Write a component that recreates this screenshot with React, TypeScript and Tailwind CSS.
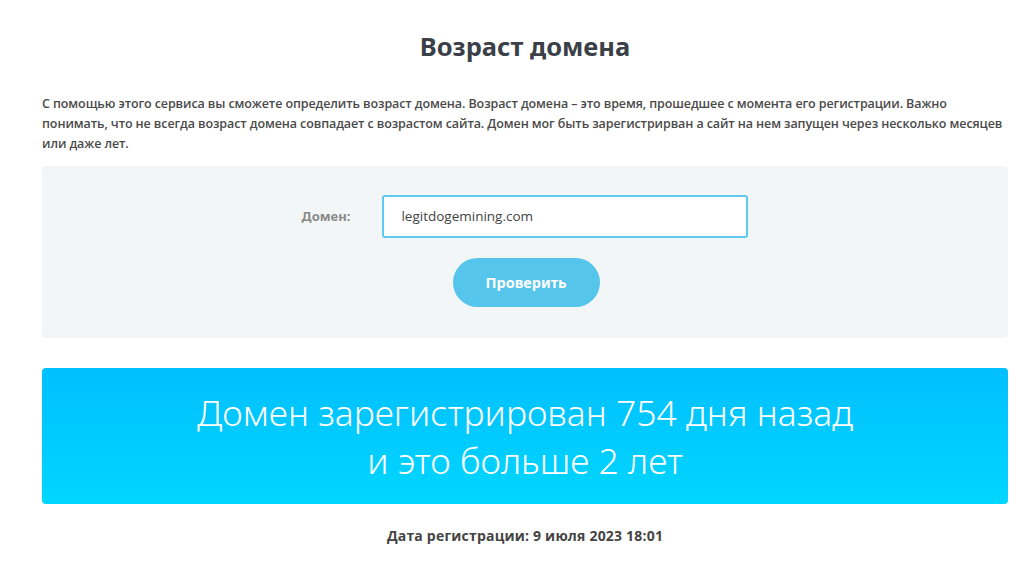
import React from "react";

export default function App() {
  return (
    <div className="min-h-[561px] bg-white pl-[42px] pr-[14px] pt-[30px] font-['Open_Sans',sans-serif]">
      <h1 className="text-center text-[25.5px] font-bold leading-[32px] text-[#3b3f48] font-['Noto_Sans',sans-serif]">
        Возраст домена
      </h1>
      <p className="mt-[32px] text-[12.5px] font-semibold leading-[20px] tracking-[-0.1px] text-[#4a4a4a]">
        С помощью этого сервиса вы сможете определить возраст домена. Возраст домена – это время, прошедшее с момента его регистрации. Важно понимать, что не всегда возраст домена совпадает с возрастом сайта. Домен мог быть зарегистрирван а сайт на нем запущен через несколько месяцев или даже лет.
      </p>
      <div className="mt-[12px] flex h-[172px] flex-col items-center rounded-[4px] bg-[#f3f6f7] pt-[29px]">
        <div className="flex items-center">
          <span className="mr-[32px] text-[13px] font-bold text-[#8a8a8a] font-['Noto_Sans',sans-serif]">Домен:</span>
          <div className="flex h-[43px] w-[366px] items-center rounded-[3px] border-2 border-[#5fc9ef] bg-white pl-[17px] text-[13.5px] text-[#444]">
            legitdogemining.com
          </div>
        </div>
        <button className="mt-[20px] ml-[2px] h-[49px] w-[147px] rounded-full bg-[#56c5ec] text-[14.5px] font-bold text-white font-['Noto_Sans',sans-serif]">
          Проверить
        </button>
      </div>
      <div className="mt-[30px] flex h-[136px] flex-col items-center justify-center rounded-[4px] bg-gradient-to-b from-[#00bfff] to-[#00d6ff] text-center text-[35.5px] font-light leading-[48px] text-white font-['Noto_Sans',sans-serif]">
        <div>Домен зарегистрирован 754 дня назад</div>
        <div>и это больше 2 лет</div>
      </div>
      <div className="mt-[21px] text-center text-[14px] font-bold tracking-[0.2px] text-[#444]">
        Дата регистрации: 9 июля 2023 18:01
      </div>
    </div>
  );
}
